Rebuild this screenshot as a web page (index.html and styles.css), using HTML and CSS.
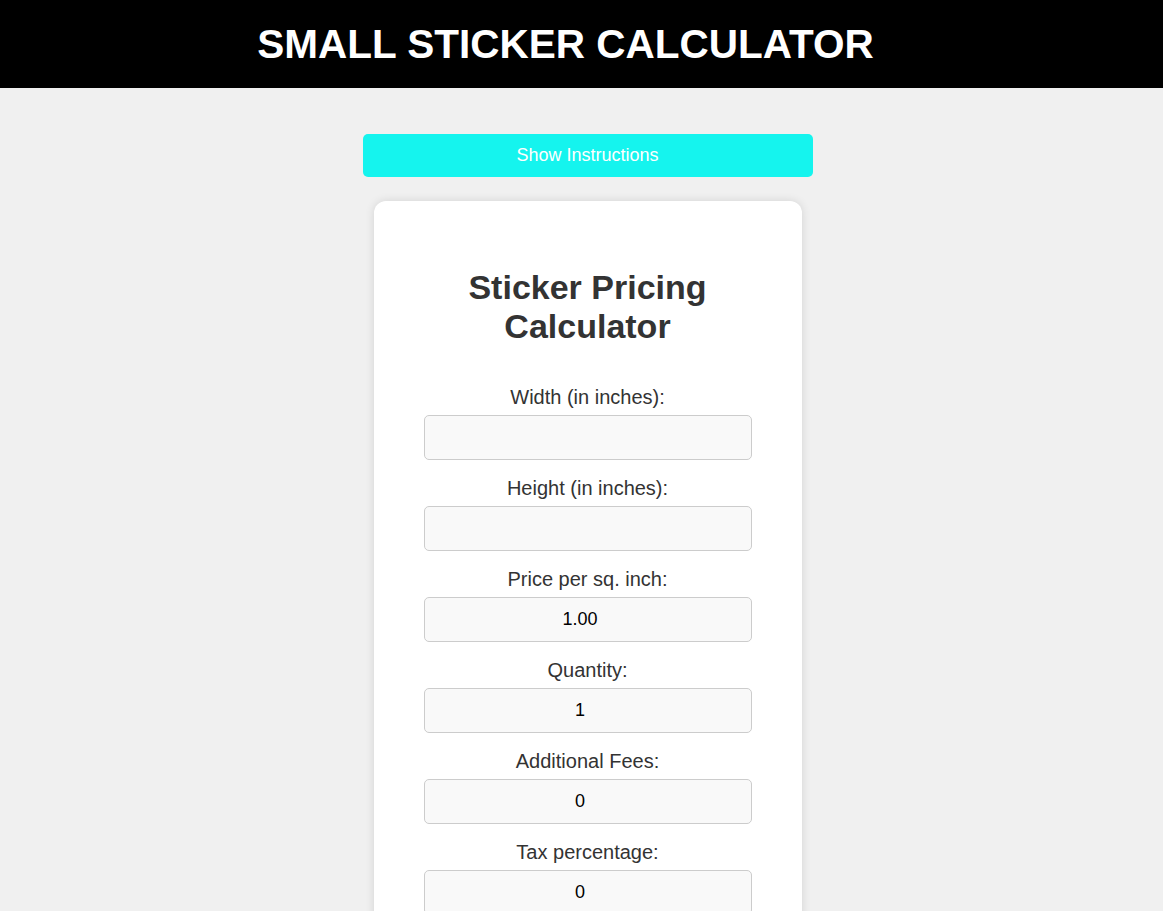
FILE: index.html
```html
<!DOCTYPE html>
<html lang="en">
<head>
  <meta charset="UTF-8" />
  <title>Small Sticker Calculator</title>
  <link rel="stylesheet" href="styles.css">
</head>
<body>
  <header class="top-bar">
    <h1>SMALL STICKER CALCULATOR</h1>
  </header>

  <main class="page">
    <button class="toggle-btn" type="button">Show Instructions</button>

    <div class="calculator">
      <h2>Sticker Pricing Calculator</h2>

      <div class="field">
        <label for="width">Width (in inches):</label>
        <input type="number" id="width" />
      </div>

      <div class="field">
        <label for="height">Height (in inches):</label>
        <input type="number" id="height" />
      </div>

      <div class="field">
        <label for="price">Price per sq. inch:</label>
        <input type="number" id="price" value="1.00" step="0.01" />
      </div>

      <div class="field">
        <label for="quantity">Quantity:</label>
        <input type="number" id="quantity" value="1" />
      </div>

      <div class="field">
        <label for="fees">Additional Fees:</label>
        <input type="number" id="fees" value="0" />
      </div>

      <div class="field">
        <label for="tax">Tax percentage:</label>
        <input type="number" id="tax" value="0" />
      </div>
    </div>
  </main>
</body>
</html>
```

FILE: styles.css
```css
* {
  box-sizing: border-box;
}

body {
  margin: 0;
  font-family: "Liberation Sans", Arial, sans-serif;
  background-color: #f0f0f0;
  color: #333;
}

.top-bar {
  background: #000;
  color: #fff;
  text-align: center;
  padding: 21px 32px 21px 0;
}

.top-bar h1 {
  margin: 0;
  font-size: 40.5px;
  line-height: 46px;
}

.page {
  display: flex;
  flex-direction: column;
  align-items: center;
  padding: 46px 0 40px 12px;
}

.toggle-btn {
  width: 450px;
  padding: 11px 0;
  border: none;
  border-radius: 5px;
  background-color: #15f4ee;
  color: #fff;
  font-family: inherit;
  font-size: 18px;
  line-height: 21px;
  cursor: pointer;
}

.calculator {
  width: 428px;
  margin-top: 24px;
  padding: 39px 50px 40px;
  background: #fff;
  border-radius: 12px;
  box-shadow: 0 0 10px rgba(0, 0, 0, 0.12);
  text-align: center;
}

.calculator h2 {
  margin: 28px 0 40px;
  font-size: 34px;
  line-height: 39px;
  color: #333;
}

.field {
  margin-bottom: 17px;
}

.field label {
  display: block;
  font-size: 20px;
  line-height: 23px;
  margin-bottom: 6px;
}

.field input {
  display: block;
  width: 100%;
  height: 45px;
  padding: 0 10px;
  border: 1px solid #ccc;
  border-radius: 5px;
  background: #f9f9f9;
  color: #000;
  font-family: inherit;
  font-size: 18px;
  text-align: center;
}
```
